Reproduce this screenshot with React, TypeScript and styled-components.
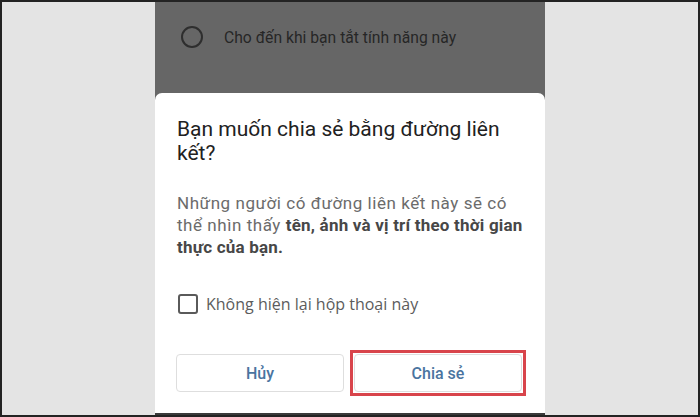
import React, { useState } from 'react';
import styled, { createGlobalStyle } from 'styled-components';

const GlobalStyle = createGlobalStyle`
  html, body {
    margin: 0;
    padding: 0;
    background: #e4e4e4;
  }
  * {
    box-sizing: border-box;
  }
`;

const Frame = styled.div`
  width: 700px;
  height: 417px;
  border: 2px solid #232323;
  background-color: #e4e4e4;
  display: flex;
  justify-content: center;
  overflow: hidden;
  font-family: Roboto, 'Noto Sans', Arial, sans-serif;
`;

const Phone = styled.div`
  width: 390px;
  display: flex;
  flex-direction: column;
  background-color: #666666;
  border-bottom: 2px solid #3a3a3a;
`;

const Backdrop = styled.div`
  height: 91px;
  padding: 24px 0 0 26px;
`;

const RadioRow = styled.div`
  display: flex;
  align-items: center;
  gap: 21px;
  color: #262626;
  font-size: 15.7px;
`;

const Radio = styled.span`
  width: 22px;
  height: 22px;
  border-radius: 50%;
  border: 2px solid #2e2e2e;
  flex-shrink: 0;
`;

const Dialog = styled.div`
  flex: 1;
  background-color: #ffffff;
  border-radius: 7px 7px 0 0;
  padding: 24px 23px 0 21px;
  display: flex;
  flex-direction: column;
`;

const Title = styled.h2`
  margin: 0 0 0 1px;
  max-width: 330px;
  font-size: 21px;
  line-height: 24px;
  font-weight: 400;
  color: #212121;
`;

const Message = styled.p`
  margin: 27px -4px 0 1px;
  font-size: 17px;
  line-height: 22px;
  letter-spacing: 0.55px;
  color: #6b6b6b;

  strong {
    font-weight: 700;
    letter-spacing: 0.2px;
    color: #474747;
  }
`;

const CheckRow = styled.label`
  display: flex;
  align-items: center;
  gap: 8px;
  margin-top: 34px;
  height: 24px;
  font-family: 'Open Sans', Roboto, sans-serif;
  font-size: 16px;
  color: #5c5c5c;
  cursor: pointer;
`;

const Box = styled.span<{ $checked: boolean }>`
  width: 20px;
  height: 20px;
  margin-left: 2px;
  border: 2px solid #5a5a5a;
  border-radius: 3px;
  background-color: ${(p) => (p.$checked ? '#5a5a5a' : 'transparent')};
  flex-shrink: 0;
`;

const Actions = styled.div`
  display: grid;
  grid-template-columns: 1fr 1fr;
  gap: 10px;
  margin-top: 38px;
`;

const ActionButton = styled.button<{ $marked?: boolean }>`
  position: relative;
  height: 38px;
  background-color: #ffffff;
  border: 1px solid #dedede;
  border-radius: 4px;
  font-family: inherit;
  font-size: 16px;
  font-weight: 500;
  color: #4a74a0;
  cursor: pointer;

  &::after {
    content: '';
    display: ${(p) => (p.$marked ? 'block' : 'none')};
    position: absolute;
    inset: -5px;
    border: 3px solid #d8444b;
    pointer-events: none;
  }
`;

const App = () => {
  const [hideNext, setHideNext] = useState(false);

  return (
    <>
      <GlobalStyle />
      <Frame>
        <Phone>
          <Backdrop>
            <RadioRow>
              <Radio />
              Cho đến khi bạn tắt tính năng này
            </RadioRow>
          </Backdrop>
          <Dialog>
            <Title>Bạn muốn chia sẻ bằng đường liên kết?</Title>
            <Message>
              Những người có đường liên kết này sẽ có thể nhìn thấy{' '}
              <strong>tên, ảnh và vị trí theo thời gian thực của bạn.</strong>
            </Message>
            <CheckRow onClick={() => setHideNext(!hideNext)}>
              <Box $checked={hideNext} />
              Không hiện lại hộp thoại này
            </CheckRow>
            <Actions>
              <ActionButton>Hủy</ActionButton>
              <ActionButton $marked>Chia sẻ</ActionButton>
            </Actions>
          </Dialog>
        </Phone>
      </Frame>
    </>
  );
};

export default App;
